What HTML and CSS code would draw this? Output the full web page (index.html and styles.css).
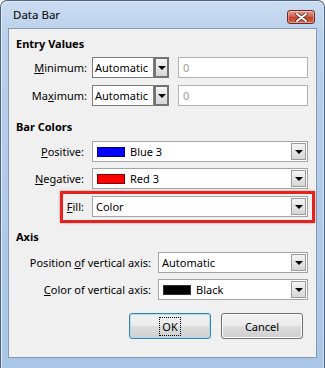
FILE: index.html
```html
<!DOCTYPE html>
<html lang="en">
<head>
<meta charset="UTF-8" />
<title>Data Bar</title>
<link rel="stylesheet" href="styles.css">
</head>
<body>
  <div class="window" role="dialog" aria-label="Data Bar">

    <div class="titlebar">
      <span class="title">Data Bar</span>
      <span class="close" aria-label="Close">
        <svg width="13" height="9" viewBox="0 0 13 9">
          <path d="M2 1 L11 8 M11 1 L2 8" stroke="#5a231c" stroke-width="3.4" stroke-linecap="round" />
          <path d="M2 1 L11 8 M11 1 L2 8" stroke="#fff" stroke-width="2" stroke-linecap="round" />
        </svg>
      </span>
    </div>

    <div class="client">

      <section class="group entry">
        <h2>Entry Values</h2>
        <div class="row">
          <label class="lbl"><u>M</u>inimum:</label>
          <div class="combo small"><span class="value">Automatic</span></div>
          <span class="drop-btn outer"><i class="tri"></i></span>
          <div class="field">0</div>
        </div>
        <div class="row">
          <label class="lbl">Ma<u>x</u>imum:</label>
          <div class="combo small"><span class="value">Automatic</span></div>
          <span class="drop-btn outer"><i class="tri"></i></span>
          <div class="field">0</div>
        </div>
      </section>

      <section class="group colors">
        <h2>Bar Colors</h2>
        <div class="row">
          <label class="lbl"><u>P</u>ositive:</label>
          <div class="combo wide">
            <span class="swatch blue"></span><span class="value">Blue 3</span>
            <span class="drop-btn"><i class="tri"></i></span>
          </div>
        </div>
        <div class="row">
          <label class="lbl"><u>N</u>egative:</label>
          <div class="combo wide">
            <span class="swatch red"></span><span class="value">Red 3</span>
            <span class="drop-btn"><i class="tri"></i></span>
          </div>
        </div>
        <div class="row fill-row">
          <label class="lbl"><u>F</u>ill:</label>
          <div class="combo wide">
            <span class="value">Color</span>
            <span class="drop-btn"><i class="tri"></i></span>
          </div>
        </div>
      </section>

      <section class="group axis">
        <h2>Axis</h2>
        <div class="row">
          <label class="lbl">Position <u>o</u>f vertical axis:</label>
          <div class="combo wide">
            <span class="value">Automatic</span>
            <span class="drop-btn"><i class="tri"></i></span>
          </div>
        </div>
        <div class="row">
          <label class="lbl"><u>C</u>olor of vertical axis:</label>
          <div class="combo wide">
            <span class="swatch black"></span><span class="value">Black</span>
            <span class="drop-btn"><i class="tri"></i></span>
          </div>
        </div>
      </section>

      <div class="buttons">
        <button class="btn default"><span class="focus">OK</span></button>
        <button class="btn">Cancel</button>
      </div>

    </div>
  </div>
</body>
</html>
```

FILE: styles.css
```css
/* Reset & base */
*, *::before, *::after {
  box-sizing: border-box;
}
html, body {
  margin: 0;
  width: 325px;
  height: 368px;
  overflow: hidden;
  background: #fff;
  font-family: 'Noto Sans', 'Open Sans', sans-serif;
  font-size: 11px;
  color: #000;
}

/* Window frame */
.window {
  width: 325px;
  height: 368px;
  border: 1px solid #4d6280;
  border-bottom: none;
  border-radius: 7px 7px 0 0;
  background: linear-gradient(#cadcf1, #b7cfea 40px, #a9c6e7);
  box-shadow: inset 1px 1px 0 #e4eef9, inset -1px 0 0 #d5e3f3;
  padding: 0 7px 10px 7px;
  display: flex;
  flex-direction: column;
}

.titlebar {
  height: 27px;
  display: flex;
  align-items: center;
  justify-content: space-between;
  padding: 0 2px 0 5px;
}
.title {
  font-size: 11.5px;
  line-height: 16px;
  margin-top: 1px;
}
.close {
  width: 28px;
  height: 14px;
  margin-top: 5px;
  border: 1px solid #6e2a20;
  border-radius: 3px;
  background: linear-gradient(#e4a192, #d0614f 45%, #c0412c 55%, #d56a51);
  box-shadow: inset 0 0 0 1px rgba(255,255,255,0.35);
  display: flex;
  align-items: center;
  justify-content: center;
}

/* Client area */
.client {
  flex-grow: 1;
  background: #f0f0f0;
  border: 1px solid #8399b6;
  padding: 7px 8px 0 7px;
  display: flex;
  flex-direction: column;
}

h2 {
  margin: 0;
  font-size: 11px;
  line-height: 16px;
  font-weight: 700;
}

.group + .group {
  margin-top: 13px;
}
.group.axis {
  margin-top: 12px;
}

.row {
  position: relative;
  height: 21px;
  display: flex;
  align-items: center;
  margin-top: 6px;
}
.entry .row { margin-top: 7px; }
.entry h2 + .row { margin-top: 5px; }
.fill-row { margin-top: 7px; }
.axis h2 + .row { margin-top: 7px; }

.lbl {
  text-align: right;
  white-space: nowrap;
  flex-shrink: 0;
}
.entry .lbl { width: 71px; margin-right: 5px; }
.colors .lbl { width: 68px; margin-right: 8px; }
.axis .lbl { width: 135px; margin-right: 7px; }

/* Red highlight round the Fill row */
.fill-row::before {
  content: '';
  position: absolute;
  left: 44px;
  top: -5px;
  right: -7px;
  bottom: -6px;
  border: 3px solid #e5231d;
  box-shadow: 0 0 2px rgba(229, 35, 29, 0.5);
  pointer-events: none;
}

/* Combo boxes */
.combo {
  height: 21px;
  background: #fff;
  border: 1px solid #a3a3a3;
  display: flex;
  align-items: center;
  padding-left: 3px;
  white-space: nowrap;
}
.combo.small {
  width: 62px;
  border-color: #7c7c7c;
  padding-left: 2px;
  overflow: hidden;
}
.combo.wide {
  flex-grow: 1;
}

.drop-btn {
  width: 15px;
  height: 17px;
  margin-left: auto;
  margin-right: 1px;
  border: 1px solid #9b9b9b;
  background: linear-gradient(#f4f4f4, #e6e6e6 50%, #d6d6d6);
  display: flex;
  align-items: center;
  justify-content: center;
}
.drop-btn.outer {
  margin: 0 9px 0 0;
  width: 15px;
  height: 21px;
  border: 2px solid #737373;
}
.tri {
  width: 0;
  height: 0;
  border-left: 4px solid transparent;
  border-right: 4px solid transparent;
  border-top: 4px solid #000;
  margin-top: 1px;
}

.swatch {
  width: 28px;
  height: 10px;
  margin: 0 5px 0 1px;
  border: 1px solid #333;
}
.swatch.blue { background: #0000ff; border-color: #00007a; }
.swatch.red { background: #ff0000; border-color: #7a0000; }
.swatch.black { background: #000; }

.field {
  flex-grow: 1;
  height: 21px;
  background: #fff;
  border: 1px solid #b3b3b3;
  color: #9d9d9d;
  padding-left: 4px;
  line-height: 19px;
}

/* Dialog buttons */
.buttons {
  display: flex;
  justify-content: flex-end;
  gap: 10px;
  margin: 13px 5px 0 0;
}
.btn {
  width: 82px;
  height: 26px;
  font-family: inherit;
  font-size: 11px;
  color: #000;
  border: 1px solid #707070;
  border-radius: 3px;
  background: linear-gradient(#f2f2f2, #ebebeb 48%, #dddddd 52%, #cfcfcf);
  box-shadow: inset 0 0 0 1px #fcfcfc;
  padding: 0;
}
.btn.default {
  border-color: #3c7fb1;
  box-shadow: inset 0 0 0 1px #a9dcf5;
}
.focus {
  outline: 1px dotted #000;
  outline-offset: 1px;
  padding: 0 1px;
}
```
